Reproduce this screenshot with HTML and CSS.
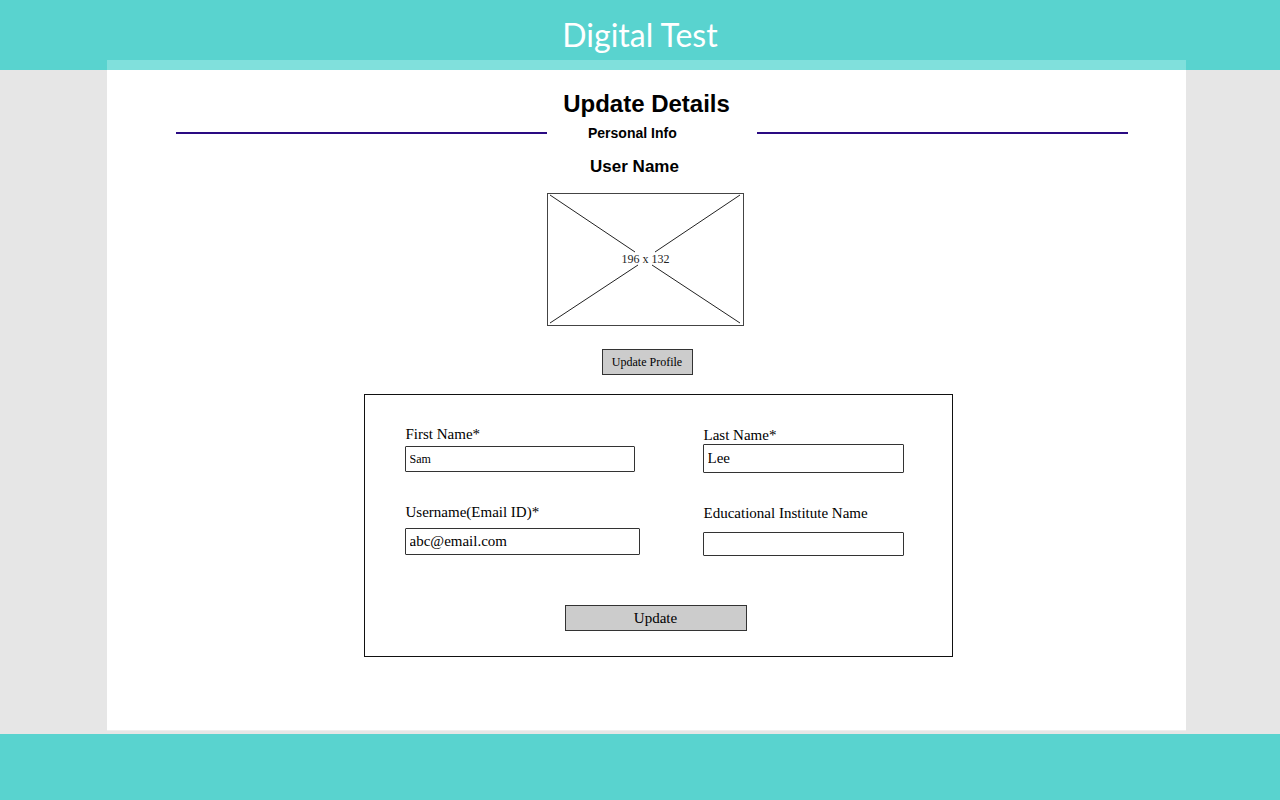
FILE: index.html
```html
<!DOCTYPE html>
<html lang="en">
<head>
<meta charset="utf-8">
<title>Digital Test - Update Details</title>
<link rel="stylesheet" href="styles.css">
</head>
<body>
<div class="page">
  <header class="header">
    <div class="brand">Digital Test</div>
    <div class="strip"></div>
  </header>
  <main class="main">
    <section class="panel">
      <h1 class="title">Update Details</h1>
      <div class="divider">
        <span class="rule"></span>
        <span class="divider-text">Personal Info</span>
        <span class="rule"></span>
      </div>
      <h2 class="user-name">User Name</h2>
      <div class="avatar">
        <svg class="avatar-x" width="195" height="131" viewBox="0 0 195 131">
          <line x1="2" y1="1" x2="87" y2="58" />
          <line x1="192" y1="1" x2="107" y2="58" />
          <line x1="2" y1="129" x2="90" y2="71" />
          <line x1="192" y1="129" x2="104" y2="71" />
        </svg>
        <span class="avatar-text">196 x 132</span>
      </div>
      <button class="btn btn-profile" type="button">Update Profile</button>
      <form class="form-box">
        <div class="fields">
          <label class="field f1">
            <span class="label">First Name*</span>
            <input class="input input-small" type="text" value="Sam">
          </label>
          <label class="field f2">
            <span class="label">Last Name*</span>
            <input class="input" type="text" value="Lee">
          </label>
          <label class="field f3">
            <span class="label">Username(Email ID)*</span>
            <input class="input" type="text" value="abc@email.com">
          </label>
          <label class="field f4">
            <span class="label">Educational Institute Name</span>
            <input class="input" type="text" value="">
          </label>
        </div>
        <button class="btn btn-update" type="button">Update</button>
      </form>
    </section>
  </main>
  <footer class="footer"></footer>
</div>
</body>
</html>
```

FILE: styles.css
```css
* { box-sizing: border-box; }

html, body {
  margin: 0;
  padding: 0;
}

body {
  background: #e6e6e6;
  font-family: "Liberation Sans", Arial, sans-serif;
  color: #000;
}

.page {
  width: 1280px;
  height: 800px;
  display: flex;
  flex-direction: column;
}

/* Header */
.header {
  background: #59d3cf;
  height: 70px;
  display: flex;
  flex-direction: column;
  flex: none;
}

.brand {
  height: 60px;
  padding-top: 16px;
  font-family: Lato, "Liberation Sans", sans-serif;
  font-size: 32px;
  line-height: 38px;
  color: #ffffff;
  text-align: center;
}

.strip {
  height: 10px;
  margin-left: 107px;
  width: 1079px;
  background: #80e0dc;
}

/* Main */
.main {
  flex: 1;
  display: flex;
  flex-direction: column;
  padding-bottom: 3px;
}

.panel {
  flex: 1;
  margin-left: 107px;
  width: 1079px;
  background: #ffffff;
  border-bottom: 1px solid #eeeeee;
  display: flex;
  flex-direction: column;
  align-items: center;
  padding-top: 20px;
}

.title {
  margin: 0;
  font-size: 24px;
  line-height: 28px;
  font-weight: bold;
}

.divider {
  align-self: stretch;
  display: flex;
  align-items: center;
  margin-top: 7px;
  padding-left: 69px;
  height: 16px;
}

.rule {
  width: 371px;
  height: 2px;
  background: #2a0a82;
}

.divider-text {
  width: 210px;
  padding-left: 41px;
  font-size: 14px;
  line-height: 16px;
  font-weight: bold;
}

.user-name {
  margin: 16px 24px 0 0;
  font-size: 17px;
  line-height: 20px;
  font-weight: bold;
}

.avatar {
  margin: 16px 2px 0 0;
  width: 197px;
  height: 133px;
  border: 1px solid #444;
  display: grid;
  place-items: center;
}

.avatar-x,
.avatar-text {
  grid-area: 1 / 1;
}

.avatar-x line {
  stroke: #222;
  stroke-width: 1;
}

.avatar-text {
  font-family: "Liberation Serif", "Times New Roman", serif;
  font-size: 12px;
  line-height: 14px;
  color: #222;
  margin-top: -2px;
}

.btn {
  font-family: "Liberation Serif", "Times New Roman", serif;
  background: #cccccc;
  border: 1px solid #333;
  border-radius: 0;
  color: #000;
  padding: 0;
  cursor: pointer;
}

.btn-profile {
  margin: 23px 0 0 1px;
  width: 91px;
  height: 26px;
  font-size: 12px;
}

/* Form */
.form-box {
  margin: 19px 0 0 23px;
  width: 589px;
  height: 263px;
  border: 1px solid #111;
  padding: 31px 0 0 40px;
  display: flex;
  flex-direction: column;
}

.fields {
  display: grid;
  grid-template-columns: 298px 1fr;
  row-gap: 31px;
  align-items: start;
}

.field {
  display: flex;
  flex-direction: column;
  align-items: flex-start;
}

.label {
  font-family: "Liberation Serif", "Times New Roman", serif;
  font-size: 15px;
  line-height: 17px;
  padding-left: 1px;
}

.input {
  font-family: "Liberation Serif", "Times New Roman", serif;
  font-size: 15px;
  color: #000;
  border: 1px solid #333;
  border-radius: 1px;
  padding: 0 4px;
  margin: 0;
  background: #fff;
  outline: none;
}

.input-small { font-size: 12px; }

.f1 .input { margin-top: 3px; width: 230px; height: 26px; }
.f2 { padding-top: 1px; }
.f2 .input { margin-top: 0; width: 201px; height: 29px; }
.f3 .input { margin-top: 7px; width: 235px; height: 27px; }
.f4 { padding-top: 1px; }
.f4 .input { margin-top: 10px; width: 201px; height: 24px; }

.btn-update {
  align-self: flex-start;
  margin: 49px 0 0 160px;
  width: 182px;
  height: 26px;
  font-size: 15px;
}

/* Footer */
.footer {
  height: 66px;
  flex: none;
  background: #59d3cf;
}
```
